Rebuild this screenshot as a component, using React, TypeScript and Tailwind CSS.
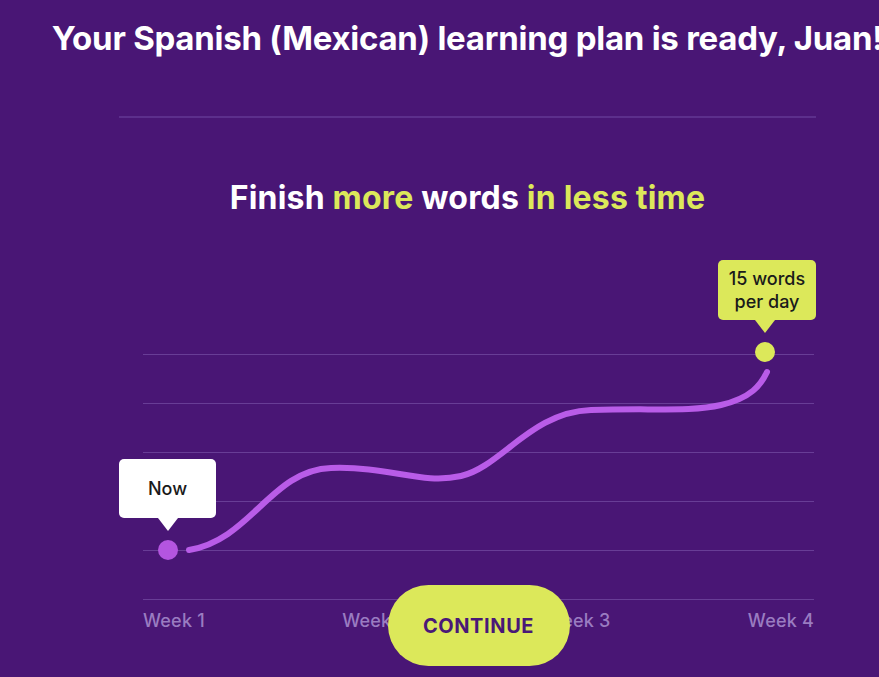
const lime = 'text-[#dce85a]';

function Tooltip({ children, className }: { children: React.ReactNode; className: string }) {
  return (
    <div className={`absolute flex items-center justify-center rounded-[5px] text-center font-medium leading-[23px] ${className}`}>
      <div>{children}</div>
    </div>
  );
}

export default function App() {
  return (
    <div className="h-[677px] w-full overflow-hidden bg-[#491675] pl-[56px] font-['Inter',sans-serif]">
      <div className="flex flex-col items-center">
        <h1 className="mt-[18px] whitespace-nowrap text-[33px] font-bold leading-[40px] tracking-[-0.25px] text-white">
          Your Spanish (Mexican) learning plan is ready, Juan!
        </h1>

        <div className="mt-[58px] flex w-[697px] flex-col">
          <div className="h-[2px] w-full bg-[#5c2f8c]" />

          <h2 className="mt-[60px] text-center text-[32px] font-bold leading-[40px] tracking-[0.2px] text-white">
            Finish <span className={lime}>more</span> words <span className={lime}>in less time</span>
          </h2>

          {/* chart */}
          <div className="relative ml-[24px] mr-[2px] mt-[32px] flex flex-col">
            <div className="h-[104px]" />
            <div className="flex flex-col gap-[48px]">
              <div className="h-px bg-[#683d96]" />
              <div className="h-px bg-[#683d96]" />
              <div className="h-px bg-[#683d96]" />
              <div className="h-px bg-[#683d96]" />
              <div className="h-px bg-[#683d96]" />
              <div className="h-px bg-[#683d96]" />
            </div>
            <div className="mt-[9px] flex justify-between text-[18px] font-medium leading-[24px] tracking-[0.2px] text-[#9a7cc1]">
              <span>Week 1</span>
              <span>Week 2</span>
              <span>Week 3</span>
              <span>Week 4</span>
            </div>

            <svg className="pointer-events-none absolute left-0 top-0" width="671" height="390" viewBox="0 0 671 390">
              <path
                d="M46 300 C108 290, 128 220, 188 218 S278 235, 318 226 S388 162, 448 160 S548 162, 578 155 S618 135, 624 122"
                fill="none"
                stroke="#b95ce8"
                strokeWidth="6"
                strokeLinecap="round"
              />
              <circle cx="25" cy="300" r="10" fill="#b455e0" />
              <circle cx="622" cy="102" r="10" fill="#dce85a" />
              <path d="M15 268 L25 281 L35 268 Z" fill="#ffffff" />
              <path d="M612 70 L622 83 L632 70 Z" fill="#dce85a" />
            </svg>

            <Tooltip className="left-[-24px] top-[209px] h-[59px] w-[97px] bg-white text-[18px] text-[#1a1a1a]">
              Now
            </Tooltip>
            <Tooltip className="left-[575px] top-[10px] h-[60px] w-[98px] bg-[#dce85a] text-[18px] text-[#1a1a1a]">
              15 words
              <br />
              per day
            </Tooltip>

            <button className="absolute left-1/2 top-[335px] flex h-[81px] w-[182px] -translate-x-1/2 items-center justify-center rounded-full bg-[#dce85a] text-[20px] font-bold tracking-[0.6px] text-[#4a1877]">
              CONTINUE
            </button>
          </div>
        </div>
      </div>
    </div>
  );
}
